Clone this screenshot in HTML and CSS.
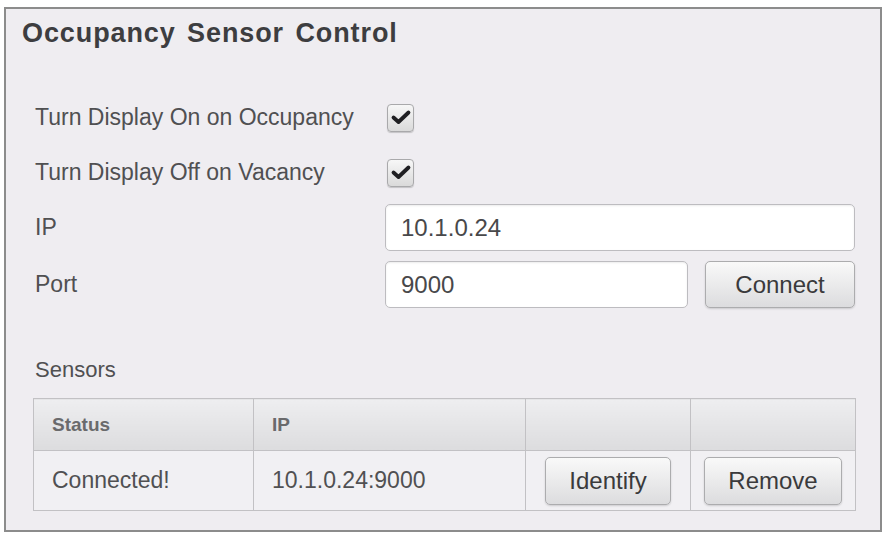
FILE: index.html
```html
<!DOCTYPE html>
<html lang="en">
<head>
    <meta charset="UTF-8">
    <title>Occupancy Sensor Control</title>
    <link rel="stylesheet" href="styles.css">
</head>
<body>
<div class="panel">
    <h2 class="panel-title">Occupancy Sensor Control</h2>

    <div class="form">
        <div class="row">
            <span class="label">Turn Display On on Occupancy</span>
            <span class="check">
                <svg width="26" height="27" viewBox="0 0 26 27"><path d="M5.5 12.5 L10.5 17 L20.5 7.5"/></svg>
            </span>
        </div>
        <div class="row">
            <span class="label">Turn Display Off on Vacancy</span>
            <span class="check">
                <svg width="26" height="27" viewBox="0 0 26 27"><path d="M5.5 12.5 L10.5 17 L20.5 7.5"/></svg>
            </span>
        </div>
        <div class="row">
            <span class="label">IP</span>
            <input class="field field-ip" type="text" value="10.1.0.24">
        </div>
        <div class="row row-port">
            <span class="label">Port</span>
            <div class="port-ctl">
                <input class="field field-port" type="text" value="9000">
                <button class="btn btn-connect">Connect</button>
            </div>
        </div>
    </div>

    <div class="sensors">
        <div class="sensors-title">Sensors</div>
        <table class="sensor-table">
            <colgroup>
                <col class="c-status">
                <col class="c-ip">
                <col class="c-act">
                <col class="c-act">
            </colgroup>
            <thead>
            <tr>
                <th>Status</th>
                <th>IP</th>
                <th></th>
                <th></th>
            </tr>
            </thead>
            <tbody>
            <tr>
                <td>Connected!</td>
                <td>10.1.0.24:9000</td>
                <td class="act"><button class="btn btn-sm">Identify</button></td>
                <td class="act"><button class="btn btn-sm">Remove</button></td>
            </tr>
            </tbody>
        </table>
    </div>
</div>
</body>
</html>
```

FILE: styles.css
```css
body, h2, table, th, td {
    margin: 0;
    padding: 0;
}

body {
    background: #fff;
    font-family: "Liberation Sans", Arial, sans-serif;
    color: #505052;
}

.panel {
    box-sizing: border-box;
    width: 878px;
    height: 525px;
    margin: 7px 0 0 4px;
    padding: 8px 16px 0;
    border: 2px solid #8c8c8c;
    background: #efedf1;
}

.panel-title {
    font-size: 27px;
    line-height: 32px;
    font-weight: bold;
    letter-spacing: 0.9px;
    word-spacing: 3px;
    color: #3d3d40;
}

/* form rows */
.form {
    display: flex;
    flex-direction: column;
    gap: 8px;
    margin: 45px 0 0 13px;
}

.row {
    display: flex;
    align-items: center;
    height: 47px;
}

.row-port {
    margin-top: 2px;
}

.label {
    width: 350px;
    flex: none;
    font-size: 23px;
}

.check {
    box-sizing: border-box;
    width: 27px;
    height: 28px;
    margin-left: 2px;
    border: 1px solid #a9a9ab;
    border-radius: 4px;
    background: linear-gradient(#f7f7f7, #dadada);
    box-shadow: 0 1px 1px rgba(0, 0, 0, 0.18);
}

.check svg {
    display: block;
}

.check path {
    fill: none;
    stroke: #1f1f22;
    stroke-width: 3.8;
    stroke-linecap: round;
    stroke-linejoin: round;
}

.field {
    box-sizing: border-box;
    height: 47px;
    padding: 0 15px;
    border: 1px solid #bdbcc0;
    border-radius: 5px;
    background: #fff;
    box-shadow: inset 0 1px 2px rgba(0, 0, 0, 0.08);
    font-family: "Liberation Sans", Arial, sans-serif;
    font-size: 24px;
    color: #48484a;
    outline: none;
}

.field-ip {
    width: 470px;
}

.port-ctl {
    display: flex;
    gap: 17px;
}

.field-port {
    width: 303px;
}

.btn {
    box-sizing: border-box;
    border: 1px solid #acacae;
    border-radius: 5px;
    background: linear-gradient(#f9f9f9, #dcdcde);
    box-shadow: 0 1px 2px rgba(0, 0, 0, 0.15);
    font-family: "Liberation Sans", Arial, sans-serif;
    font-size: 24px;
    color: #3a3a3c;
    cursor: pointer;
}

.btn-connect {
    width: 150px;
    height: 47px;
}

/* sensors table */
.sensors {
    margin: 48px 0 0 13px;
}

.sensors-title {
    font-size: 22px;
    line-height: 28px;
}

.sensor-table {
    width: 822px;
    margin: 14px 0 0 -2px;
    border-collapse: collapse;
    table-layout: fixed;
}

.c-status {
    width: 220px;
}

.c-ip {
    width: 272px;
}

.c-act {
    width: 165px;
}

.sensor-table th,
.sensor-table td {
    border: 1px solid #c2c1c4;
    padding: 0 18px;
    text-align: left;
}

.sensor-table th {
    height: 51px;
    background: linear-gradient(#eeeef0, #dcdcde);
    font-size: 19px;
    font-weight: bold;
    color: #6a6a6c;
}

.sensor-table td {
    height: 59px;
    background: #f1f0f3;
    font-size: 23px;
}

.sensor-table td.act {
    padding: 0;
    text-align: center;
}

.btn-sm {
    height: 48px;
    padding: 0 23px;
}
```
